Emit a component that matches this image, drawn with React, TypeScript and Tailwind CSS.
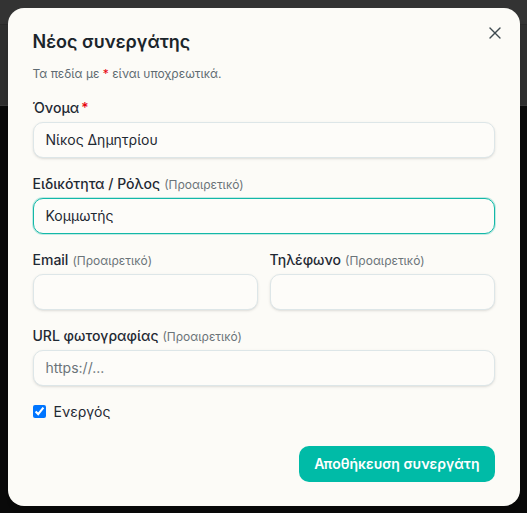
import { X } from "lucide-react";

function Field({ label, optional, required, value, placeholder, focused }: {
  label: string;
  optional?: boolean;
  required?: boolean;
  value?: string;
  placeholder?: string;
  focused?: boolean;
}) {
  return (
    <div className="flex flex-col gap-1">
      <label className="text-sm leading-5 font-medium text-[#1f2933]">
        {label}
        {required && <span className="text-red-600 ml-0.5">*</span>}
        {optional && <span className="ml-1 text-xs font-normal text-[#6b7479]">(Προαιρετικό)</span>}
      </label>
      <input
        defaultValue={value}
        placeholder={placeholder}
        className={
          focused
            ? "h-9 w-full rounded-[10px] border border-[#13b8a8] bg-[#fdfcf9] px-3 text-sm text-[#1f2933] outline-none shadow-[0_0_0_1px_rgba(20,184,168,0.25)]"
            : "h-9 w-full rounded-[10px] border border-[#dde6e8] bg-[#fdfcf9] px-3 text-sm text-[#1f2933] placeholder:text-[#6b7479] outline-none shadow-sm"
        }
      />
    </div>
  );
}

export default function App() {
  return (
    <div className="relative h-[513px] w-[527px] overflow-hidden" style={{ fontFamily: "Inter, 'Noto Sans', sans-serif" }}>
      <div className="flex h-full flex-col">
        <div className="h-[25px] bg-[#333333] border-b border-[#2a2a2a]"></div>
        <div className="h-[81px] bg-[#2f2f2f] border-b border-[#3a3a3a]"></div>
        <div className="flex-1 bg-[#0a0a0a]"></div>
      </div>

      <div className="absolute inset-0 flex items-center justify-center">
        <div className="relative w-full max-w-lg rounded-2xl bg-[#fcfbf7] px-[25px] pt-5 pb-6 shadow-xl">
          <button className="absolute top-[15px] right-[15px] text-[#3f4a50]">
            <X size={20} strokeWidth={1.6} />
          </button>

          <h2 className="text-lg leading-7 font-semibold text-[#1b252b]">Νέος συνεργάτης</h2>
          <p className="mt-2 text-xs leading-5 text-[#5f6b72]">
            Τα πεδία με <span className="text-red-600">*</span> είναι υποχρεωτικά.
          </p>

          <div className="mt-[14px] flex flex-col gap-4">
            <Field label="Όνομα" required value="Νίκος Δημητρίου" />
            <Field label="Ειδικότητα / Ρόλος" optional value="Κομμωτής" focused />
            <div className="grid grid-cols-2 gap-3">
              <Field label="Email" optional />
              <Field label="Τηλέφωνο" optional />
            </div>
            <Field label="URL φωτογραφίας" optional placeholder="https://..." />
            <label className="flex h-5 items-center gap-2 text-sm text-[#1f2933]">
              <input type="checkbox" defaultChecked className="h-[13px] w-[13px]" />
              Ενεργός
            </label>
          </div>

          <div className="mt-6 flex justify-end">
            <button className="h-9 rounded-[10px] bg-teal-500 px-[15px] text-sm font-semibold text-white">
              Αποθήκευση συνεργάτη
            </button>
          </div>
        </div>
      </div>
    </div>
  );
}
